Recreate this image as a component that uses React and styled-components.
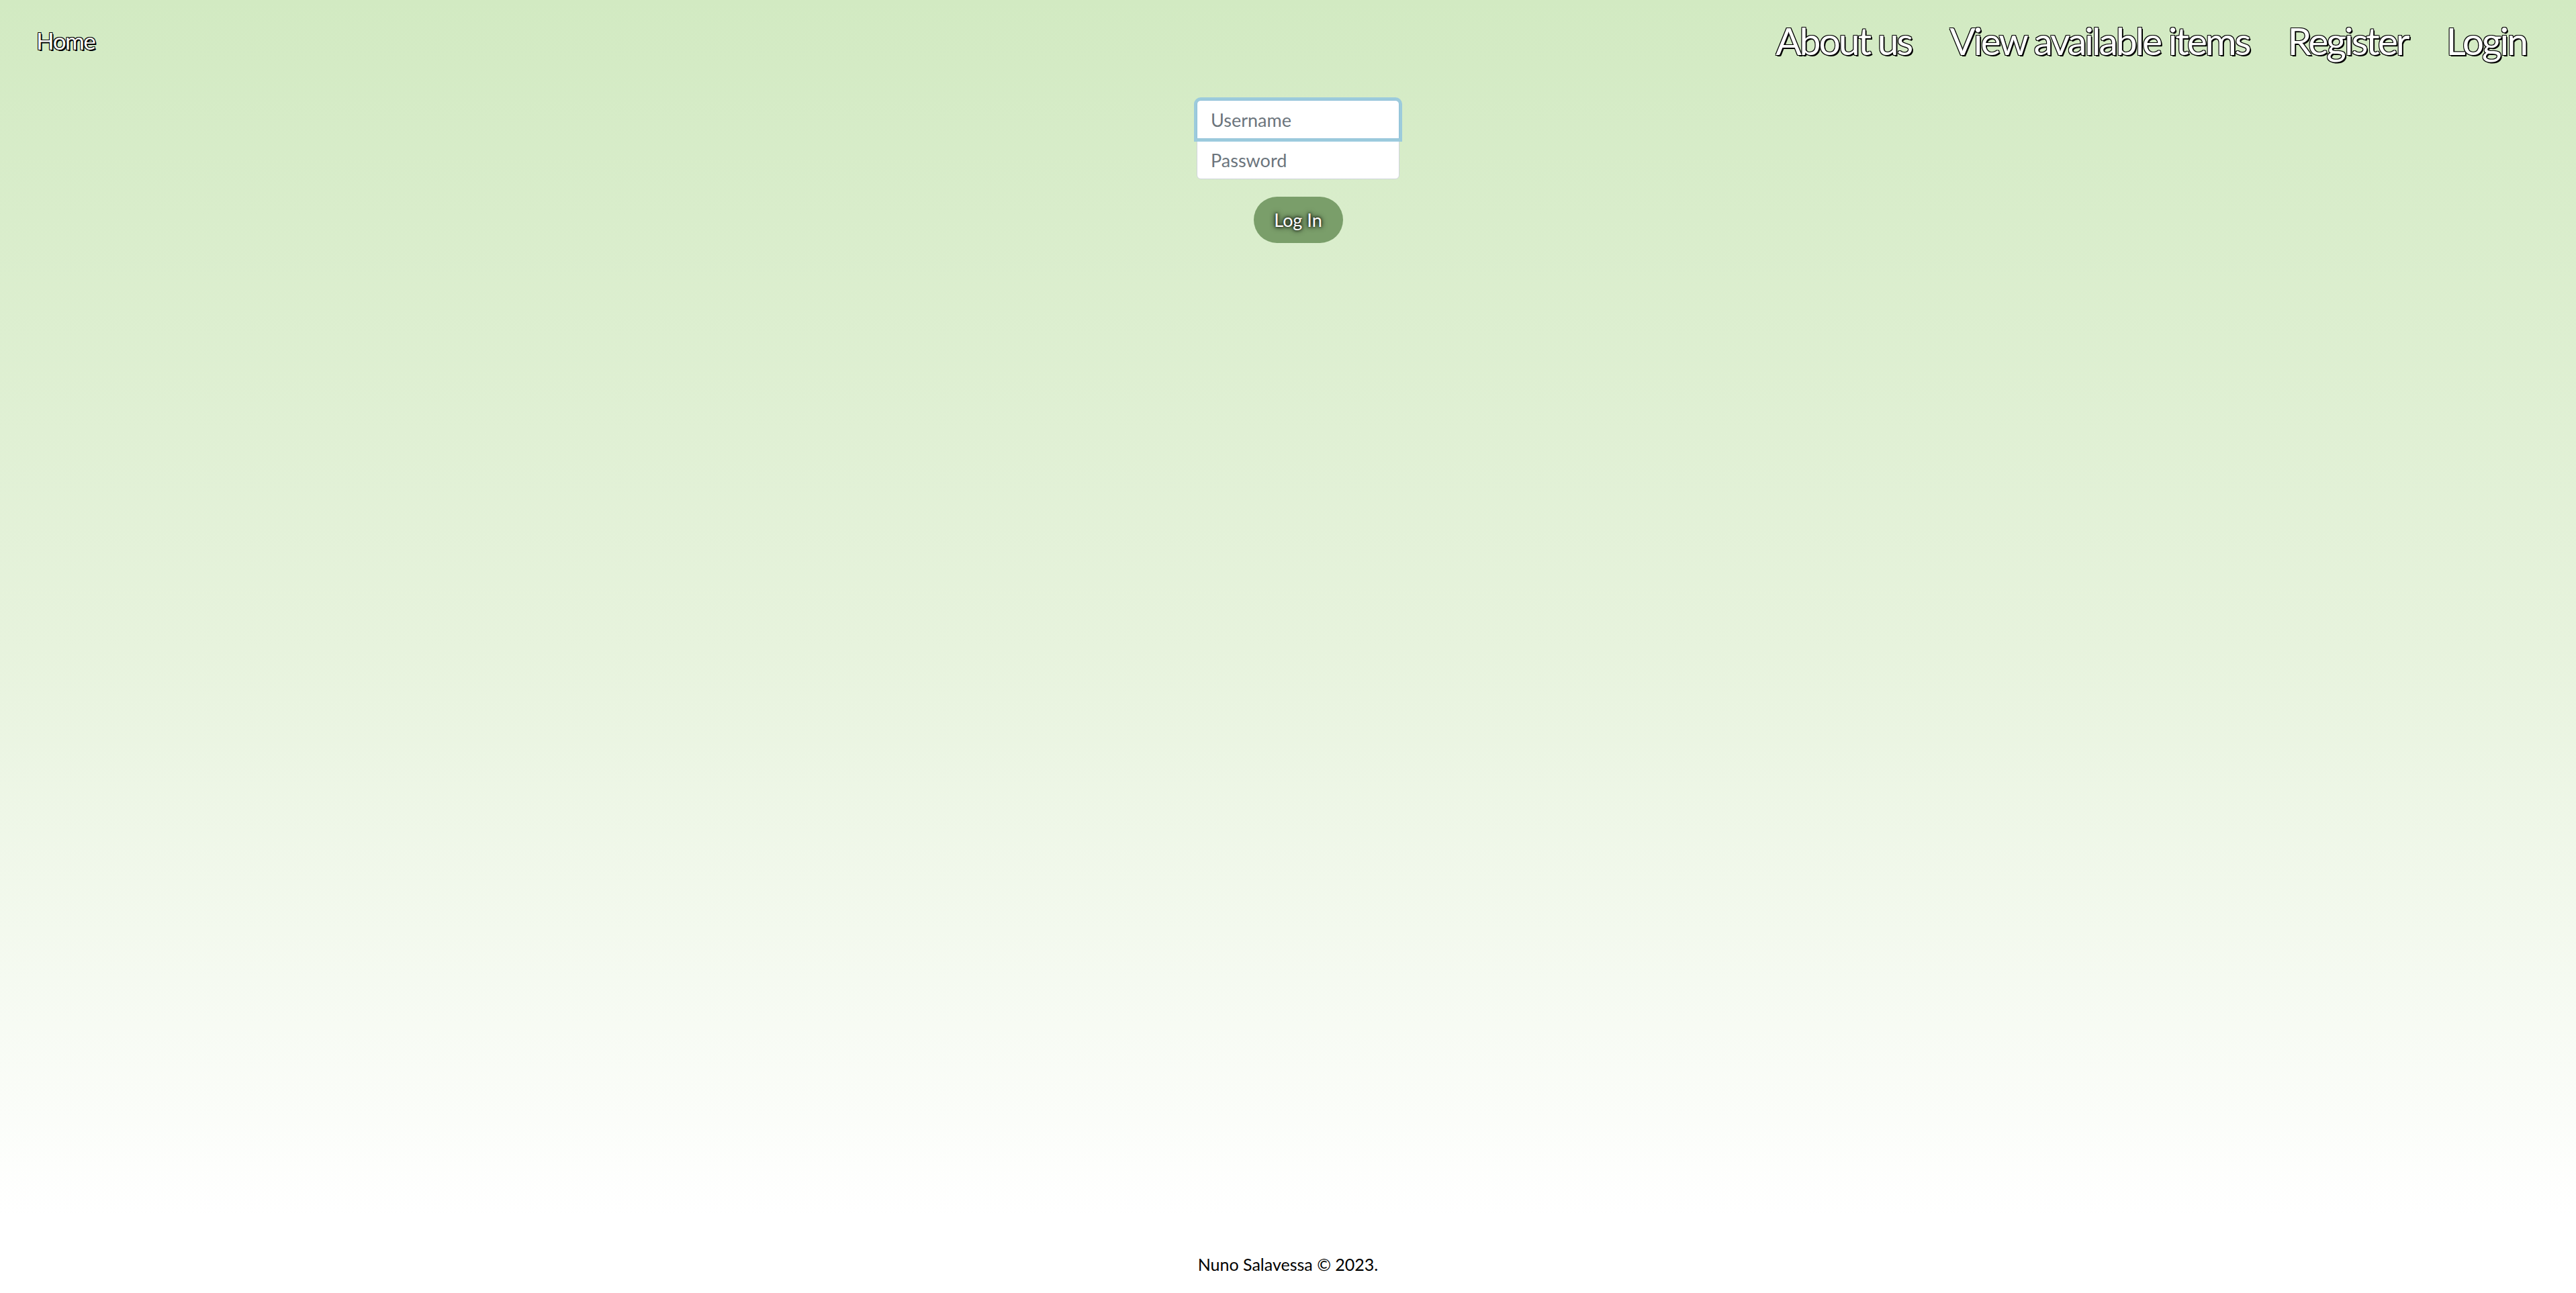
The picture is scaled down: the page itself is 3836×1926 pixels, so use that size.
import styled, { createGlobalStyle } from "styled-components";

const GlobalStyle = createGlobalStyle`
	html, body {
		margin: 0;
		padding: 0;
	}
	body {
		font-family: Lato, "Open Sans", sans-serif;
		background: linear-gradient(to bottom, #d2eac2 0%, #e7f3dd 50%, #ffffff 94%, #ffffff 100%);
		min-height: 100vh;
	}
	#root {
		min-height: 100vh;
		display: flex;
		flex-direction: column;
	}
`;

const outline = `
	color: #ffffff;
	text-shadow:
		-1px -1px 0 #000,
		1px -1px 0 #000,
		-1px 1px 0 #000,
		1px 1px 0 #000,
		2px 2px 0 #000;
`;

const Header = styled.header`
	height: 120px;
	padding: 0 74px 0 54px;
	display: flex;
	align-items: center;
	justify-content: space-between;
`;

const HomeLink = styled.a`
	${outline}
	font-size: 35px;
	letter-spacing: -1.5px;
	text-decoration: none;
	cursor: pointer;
`;

const Nav = styled.nav`
	display: flex;
	align-items: center;
	gap: 57px;
`;

const NavLink = styled.a`
	${outline}
	font-size: 57px;
	letter-spacing: -3px;
	text-decoration: none;
	cursor: pointer;
`;

const Main = styled.main`
	display: flex;
	flex-direction: column;
	align-items: center;
	padding-top: 29px;
	padding-left: 30px;
`;

const Form = styled.form`
	display: flex;
	flex-direction: column;
	align-items: center;
`;

const Field = styled.input`
	box-sizing: border-box;
	width: 302px;
	height: 58px;
	padding: 0 20px;
	font-family: Lato, sans-serif;
	font-size: 27px;
	color: #212529;
	background: #ffffff;
	border: 1px solid ${(p) => (p.$focused ? "#8fc0d8" : "#ced4da")};
	border-radius: ${(p) => (p.$top ? "6px 6px 0 0" : "0 0 6px 6px")};
	margin-top: ${(p) => (p.$top ? "0" : "2px")};
	box-shadow: ${(p) => (p.$focused ? "0 0 0 4px rgba(150, 200, 222, 0.9)" : "none")};
	outline: none;
	position: relative;
	z-index: ${(p) => (p.$focused ? 1 : 0)};

	&::placeholder {
		color: #6c757d;
	}
`;

const SubmitButton = styled.button`
	margin-top: 26px;
	width: 133px;
	height: 69px;
	border: none;
	border-radius: 35px;
	background: #7a9e6a;
	color: #ffffff;
	font-family: Lato, sans-serif;
	font-size: 27px;
	text-shadow: 0 0 4px #000, 0 0 8px #000;
	cursor: pointer;
`;

const Footer = styled.footer`
	margin-top: auto;
	padding-bottom: 28px;
	text-align: center;
	font-size: 25px;
	line-height: 30px;
	color: #000;
`;

export default function App() {
	return (
		<>
			<GlobalStyle />
			<Header>
				<HomeLink>Home</HomeLink>
				<Nav>
					<NavLink>About us</NavLink>
					<NavLink>View available items</NavLink>
					<NavLink>Register</NavLink>
					<NavLink>Login</NavLink>
				</Nav>
			</Header>
			<Main>
				<Form onSubmit={(e) => e.preventDefault()}>
					<Field $top $focused type="text" placeholder="Username" autoFocus />
					<Field type="password" placeholder="Password" />
					<SubmitButton type="submit">Log In</SubmitButton>
				</Form>
			</Main>
			<Footer>Nuno Salavessa © 2023.</Footer>
		</>
	);
}
